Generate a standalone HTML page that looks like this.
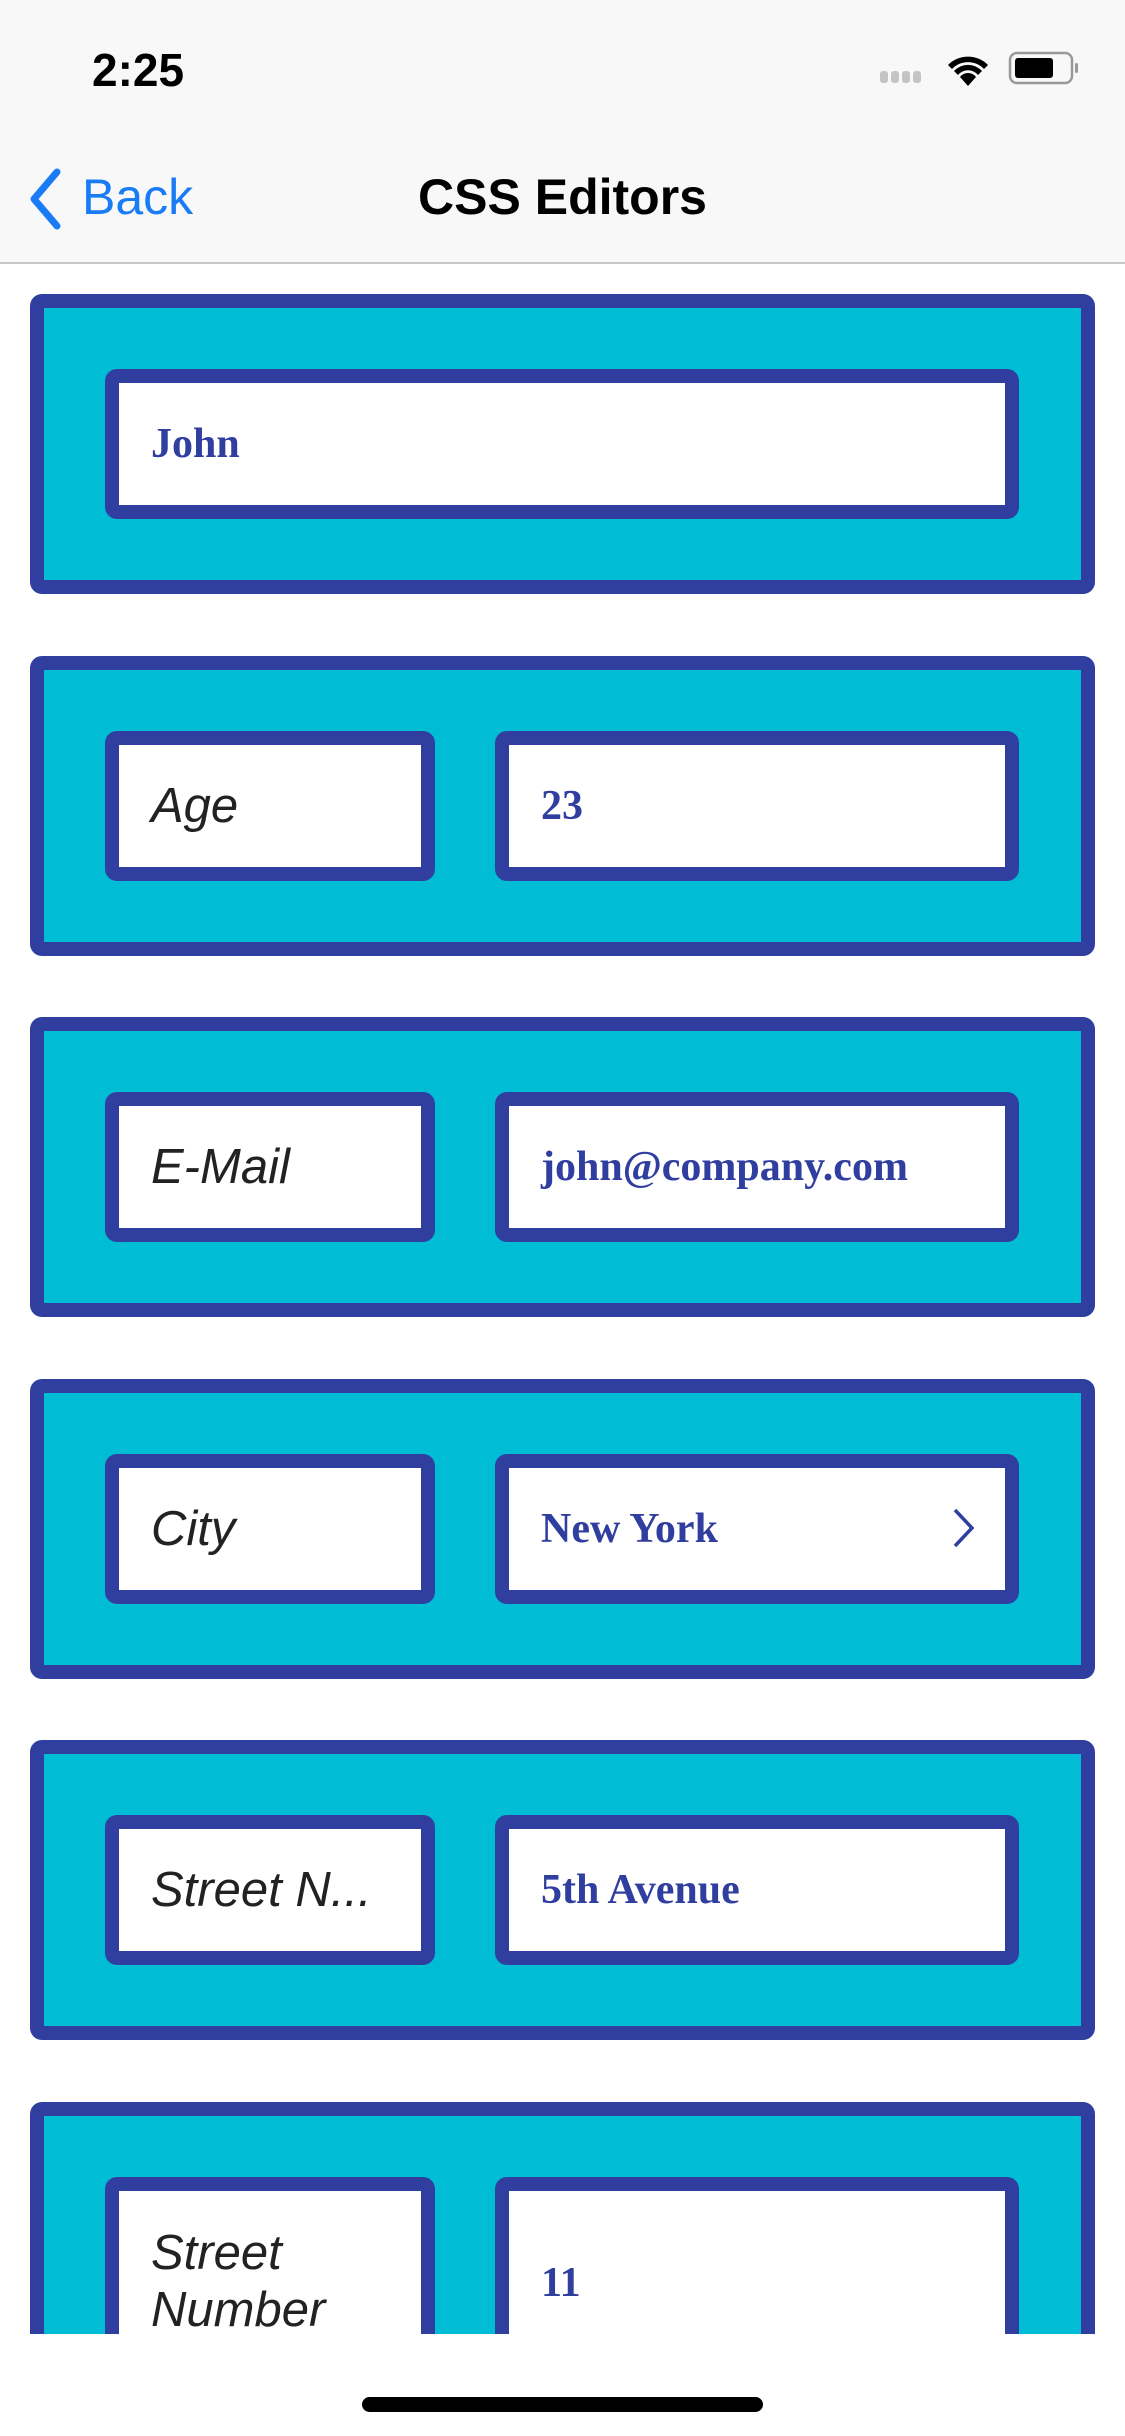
<!DOCTYPE html>
<html><head><meta charset="utf-8"><style>
*{margin:0;padding:0;box-sizing:border-box}
body{width:1125px;height:2436px;position:relative;background:#fff;overflow:hidden;font-family:"Liberation Sans",sans-serif}
.hdr{position:absolute;left:0;top:0;width:1125px;height:264px;background:#f8f8f8;border-bottom:2px solid #c8c8c8}
.time{position:absolute;left:92px;top:43px;font-size:46px;font-weight:bold;color:#000}
.title{position:absolute;left:0;width:1125px;text-align:center;top:168px;font-size:50px;font-weight:bold;color:#000}
.back{position:absolute;left:82px;top:168px;font-size:50px;color:#1a7cf5}
.card{position:absolute;left:30px;width:1065px;height:300px;background:#00bcd4;border:14px solid #303f9f;border-radius:12px}
.f{position:absolute;top:61px;height:150px;background:#fff;border:14px solid #303f9f;border-radius:12px;display:flex;align-items:center;overflow:hidden}
.l{left:61px;width:330px}
.r{left:451px;width:524px}
.w{left:61px;width:914px}
.lab{font-style:italic;font-size:49px;color:#222;padding-left:32px;white-space:nowrap;line-height:57px}
.val{font-family:"Liberation Serif",serif;font-weight:bold;font-size:42px;color:#303f9f;padding-left:32px}
.clip{position:absolute;left:0;top:266px;width:1125px;height:2068px;overflow:hidden}
</style></head><body>
<div class="hdr">
<div class="time">2:25</div>
<svg style="position:absolute;left:880px;top:51px" width="200" height="40">
<g fill="#c4c4c4"><rect x="0" y="20" width="8" height="12" rx="3"/><rect x="11" y="20" width="8" height="12" rx="3"/><rect x="22" y="20" width="8" height="12" rx="3"/><rect x="33" y="20" width="8" height="12" rx="3"/></g>
<path d="M68 14a28 28 0 0 1 40 0l-4 4a22 22 0 0 0-32 0z M74 20a19 19 0 0 1 28 0l-4 4a13 13 0 0 0-20 0z M80 26a10 10 0 0 1 16 0l-8 9z" fill="#000"/>
<rect x="130" y="2" width="62" height="30" rx="7" fill="none" stroke="#999" stroke-width="2.5"/>
<rect x="135" y="7" width="38" height="20" rx="3" fill="#000"/>
<rect x="195" y="12" width="3" height="10" rx="1.5" fill="#999"/>
</svg>
<svg style="position:absolute;left:24px;top:166px" width="40" height="66"><path d="M33 6L10 33l23 27" fill="none" stroke="#1a7cf5" stroke-width="7" stroke-linecap="round" stroke-linejoin="round"/></svg>
<div class="back">Back</div>
<div class="title">CSS Editors</div>
</div>
<div class="clip">
<div class="card" style="top:28px"><div class="f w"><span class="val">John</span></div></div>
<div class="card" style="top:390px"><div class="f l"><span class="lab">Age</span></div><div class="f r"><span class="val">23</span></div></div>
<div class="card" style="top:751px"><div class="f l"><span class="lab">E-Mail</span></div><div class="f r"><span class="val">john@company.com</span></div></div>
<div class="card" style="top:1113px"><div class="f l"><span class="lab">City</span></div><div class="f r"><span class="val">New York</span>
<svg style="position:absolute;left:440px;top:38px" width="30" height="44"><path d="M6 4l17 18-17 18" fill="none" stroke="#303f9f" stroke-width="3.5"/></svg></div></div>
<div class="card" style="top:1474px"><div class="f l"><span class="lab">Street N...</span></div><div class="f r"><span class="val">5th Avenue</span></div></div>
<div class="card" style="top:1836px;height:400px"><div class="f l" style="height:300px;align-items:flex-start;padding-top:34px"><span class="lab">Street<br>Number</span></div><div class="f r" style="height:300px;align-items:flex-start;padding-top:68px"><span class="val">11</span></div></div>
</div>
<div style="position:absolute;left:362px;top:2397px;width:401px;height:15px;border-radius:8px;background:#000"></div>
</body></html>
